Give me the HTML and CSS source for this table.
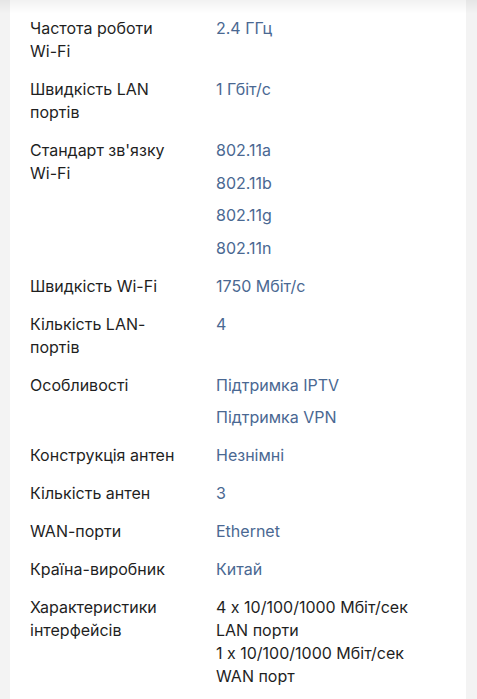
FILE: index.html
```html
<!DOCTYPE html>
<html lang="uk">
<head>
<meta charset="utf-8">
<link rel="stylesheet" href="styles.css">
</head>
<body>
<div class="top-shadow"></div>
<section class="card">
  <dl class="specs">
    <div class="row"><dt>Частота роботи Wi-Fi</dt><dd><a>2.4 ГГц</a></dd></div>
    <div class="row"><dt>Швидкість LAN портів</dt><dd><a>1 Гбіт/с</a></dd></div>
    <div class="row"><dt>Стандарт зв'язку Wi-Fi</dt><dd><a>802.11a</a><a>802.11b</a><a>802.11g</a><a>802.11n</a></dd></div>
    <div class="row"><dt>Швидкість Wi-Fi</dt><dd><a>1750 Мбіт/с</a></dd></div>
    <div class="row"><dt>Кількість LAN-портів</dt><dd><a>4</a></dd></div>
    <div class="row"><dt>Особливості</dt><dd><a>Підтримка IPTV</a><a>Підтримка VPN</a></dd></div>
    <div class="row"><dt>Конструкція антен</dt><dd><a>Незнімні</a></dd></div>
    <div class="row"><dt>Кількість антен</dt><dd><a>3</a></dd></div>
    <div class="row"><dt>WAN-порти</dt><dd><a>Ethernet</a></dd></div>
    <div class="row"><dt>Країна-виробник</dt><dd><a>Китай</a></dd></div>
    <div class="row"><dt>Характеристики інтерфейсів</dt><dd><span class="plain">4 x 10/100/1000 Мбіт/сек LAN порти<br>1 x 10/100/1000 Мбіт/сек WAN порт</span></dd></div>
  </dl>
</section>
</body>
</html>
```

FILE: styles.css
```css
html, body {
  margin: 0;
  padding: 0;
}
body {
  background: #f3f3f3;
  font-family: Inter, "Noto Sans", sans-serif;
  font-size: 16px;
  line-height: 23px;
  color: #1f1f1f;
  font-feature-settings: "calt" 0;
}
.top-shadow {
  position: fixed;
  top: 0;
  left: 0;
  right: 0;
  height: 14px;
  background: linear-gradient(to bottom, rgba(0,0,0,0.05), rgba(0,0,0,0));
  pointer-events: none;
}
.card {
  margin: 0 11px 0 10px;
  background: #ffffff;
  padding: 17px 20px 20px;
  min-height: 700px;
  box-sizing: border-box;
}
.specs {
  margin: 0;
  display: flex;
  flex-direction: column;
  gap: 15px;
}
.row {
  display: grid;
  grid-template-columns: 148px 1fr;
  column-gap: 38px;
}
dt {
  margin: 0;
}
dd {
  margin: 0;
  display: flex;
  flex-direction: column;
  gap: 9.5px;
}
dd a {
  color: #4a6892;
  text-decoration: none;
}
.plain {
  color: #1f1f1f;
  width: 210px;
}
```
